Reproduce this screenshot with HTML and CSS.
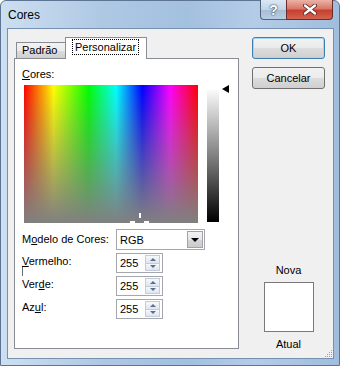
FILE: index.html
```html
<!DOCTYPE html>
<html lang="pt">
<head>
<meta charset="UTF-8" />
<title>Cores</title>
<link rel="stylesheet" href="styles.css">
</head>
<body>

<div class="window">
  <div class="titlebar">
    <span class="title">Cores</span>
    <div class="caption">
      <div class="cap help">?</div>
      <div class="cap close">
        <svg width="14" height="11" viewBox="0 0 14 11">
          <path d="M2 1.5 L12 9.5 M12 1.5 L2 9.5" stroke="#5a1d18" stroke-width="4" stroke-linecap="round"/>
          <path d="M2 1.5 L12 9.5 M12 1.5 L2 9.5" stroke="#fff" stroke-width="2.4" stroke-linecap="round"/>
        </svg>
      </div>
    </div>
  </div>

  <div class="client">
    <div class="left">
      <div class="tabs">
        <div class="tab">Padrão</div>
        <div class="tab active"><span class="focus">Personalizar</span></div>
      </div>
      <div class="panel">
        <div class="cores-label"><u>C</u>ores:</div>
        <div class="picker">
          <div class="spectrum">
            <span class="cross cross-v"></span>
            <span class="cross cross-l"></span>
            <span class="cross cross-r"></span>
          </div>
          <div class="lum"></div>
          <div class="arrow"></div>
        </div>
        <div class="fields">
          <label>M<u>o</u>delo de Cores:</label>
          <div class="combo">
            <span class="val">RGB</span>
            <span class="drop"></span>
          </div>

          <label class="spin-label caret"><u>V</u>ermelho:</label>
          <div class="spin">
            <span class="val">255</span>
            <span class="spin-btns"><span class="up"></span><span class="down"></span></span>
          </div>

          <label class="spin-label">Ver<u>d</u>e:</label>
          <div class="spin">
            <span class="val">255</span>
            <span class="spin-btns"><span class="up"></span><span class="down"></span></span>
          </div>

          <label class="spin-label">Az<u>u</u>l:</label>
          <div class="spin">
            <span class="val">255</span>
            <span class="spin-btns"><span class="up"></span><span class="down"></span></span>
          </div>
        </div>
      </div>
    </div>

    <div class="right">
      <button class="btn default">OK</button>
      <button class="btn">Cancelar</button>
      <div class="nova">Nova</div>
      <div class="swatch"></div>
      <div class="atual">Atual</div>
    </div>

    <svg class="grip" width="9" height="9" viewBox="0 0 9 9">
      <g fill="#a0a0a0">
        <rect x="7" y="1" width="1" height="1"/>
        <rect x="5" y="3" width="1" height="1"/><rect x="7" y="3" width="1" height="1"/>
        <rect x="3" y="5" width="1" height="1"/><rect x="5" y="5" width="1" height="1"/><rect x="7" y="5" width="1" height="1"/>
        <rect x="1" y="7" width="1" height="1"/><rect x="3" y="7" width="1" height="1"/><rect x="5" y="7" width="1" height="1"/><rect x="7" y="7" width="1" height="1"/>
      </g>
    </svg>
  </div>
</div>

</body>
</html>
```

FILE: styles.css
```css
* {
  box-sizing: border-box;
}
body {
  margin: 0;
  background: #fff;
  font-family: "Liberation Sans", Arial, sans-serif;
  font-size: 11px;
  color: #000;
}
.window {
  width: 340px;
  height: 366px;
  border: 1px solid #5d7593;
  border-radius: 6px 6px 0 0;
  background: linear-gradient(to right, #cddff1 0%, #aec8e4 30%, #a3c0df 55%, #b4cce7 75%, #a0bddd 100%);
  display: flex;
  flex-direction: column;
}
.titlebar {
  height: 27px;
  display: flex;
  justify-content: space-between;
  align-items: flex-start;
}
.title {
  padding: 7px 0 0 7px;
  font-size: 12px;
  line-height: 14px;
}
.caption {
  display: flex;
  margin-top: -1px;
  margin-right: 6px;
}
.cap {
  height: 20px;
  display: flex;
  align-items: center;
  justify-content: center;
  border: 1px solid #51637c;
  border-top: none;
}
.help {
  width: 26px;
  border-right: none;
  border-radius: 0 0 0 4px;
  background: linear-gradient(#dce7f3, #c2d4e8 50%, #a7bdd6 51%, #b9cde2);
  color: #fff;
  font-weight: bold;
  font-size: 14px;
  text-shadow: 0 0 2px #2b3c52, 0 0 1px #2b3c52;
}
.close {
  width: 47px;
  border-color: #6a2d27;
  border-radius: 0 0 4px 0;
  background: linear-gradient(#eab3a6, #d9786a 45%, #c7402f 55%, #d4624d);
}
.client {
  height: 331px;
  margin: 0 5px 0 6px;
  border: 1px solid #7690b0;
  background: #f0f0f0;
  display: flex;
  position: relative;
}
.left {
  padding: 8px 0 0 6px;
}
.tabs {
  display: flex;
  align-items: flex-end;
  padding-left: 2px;
}
.tab {
  height: 16px;
  width: 50px;
  border: 1px solid #898c95;
  border-bottom: none;
  background: linear-gradient(#f2f2f2, #ebebeb 50%, #dddddd 51%, #cfcfcf);
  padding: 1px 0 0 5px;
  line-height: 13px;
}
.tab.active {
  width: 82px;
  height: 22px;
  margin-left: -1px;
  margin-bottom: -1px;
  background: #fff;
  position: relative;
  padding: 3px 0 0 6px;
}
.focus {
  border: 1px dotted #000;
  padding: 1px 2px;
}
.panel {
  width: 225px;
  height: 291px;
  border: 1px solid #898c95;
  background: #fff;
  padding: 9px 0 0 7px;
}
.cores-label {
  line-height: 13px;
  height: 13px;
}
.picker {
  display: flex;
  align-items: flex-start;
  margin: 4px 0 0 2px;
}
.spectrum {
  width: 174px;
  height: 138px;
  position: relative;
  background:
    linear-gradient(to bottom, rgba(128, 128, 128, 0), #808080),
    linear-gradient(to right, #f00 0%, #ff0 17%, #0f0 37%, #0ff 53%, #00f 68%, #f0f 84%, #f00 100%);
}
.cross {
  position: absolute;
  background: #fff;
}
.cross-v {
  left: 115px;
  top: 128px;
  width: 2px;
  height: 5px;
}
.cross-l {
  left: 106px;
  top: 136px;
  width: 5px;
  height: 2px;
}
.cross-r {
  left: 120px;
  top: 136px;
  width: 5px;
  height: 2px;
}
.lum {
  width: 12px;
  height: 132px;
  margin: 5px 0 0 9px;
  background: linear-gradient(#fafafa, #808080 50%, #000);
}
.arrow {
  margin-left: 3px;
  width: 0;
  height: 0;
  border-top: 4px solid transparent;
  border-bottom: 4px solid transparent;
  border-right: 7px solid #000;
}
.fields {
  margin-top: 6px;
  display: grid;
  grid-template-columns: 94px auto;
  row-gap: 3px;
  justify-items: start;
}
.fields label {
  align-self: center;
  line-height: 13px;
}
.fields .spin-label {
  align-self: start;
  padding-top: 2px;
}
.caret {
  position: relative;
}
.caret::after {
  content: "";
  position: absolute;
  left: 0;
  top: 14px;
  height: 9px;
  border-left: 1px solid #6d6d6d;
}
.combo {
  width: 89px;
  height: 21px;
  border: 1px solid #a4a7ae;
  background: #fff;
  display: flex;
  align-items: center;
  padding: 1px;
}
.val {
  flex: 1;
  padding-left: 2px;
}
.drop {
  width: 16px;
  height: 17px;
  border: 1px solid #a0a3aa;
  background: linear-gradient(#f3f3f3, #e6e6e6 50%, #d6d6d6 51%, #cbcbcb);
  display: flex;
  align-items: center;
  justify-content: center;
}
.drop::after {
  content: "";
  border-left: 4px solid transparent;
  border-right: 4px solid transparent;
  border-top: 4px solid #000;
}
.spin {
  width: 47px;
  height: 20px;
  border: 1px solid #a4a7ae;
  background: #fff;
  display: flex;
  align-items: center;
  padding: 1px 2px 1px 1px;
}
.spin-btns {
  width: 15px;
  height: 16px;
  display: flex;
  flex-direction: column;
}
.spin-btns span {
  flex: 1;
  border: 1px solid #c4ccd8;
  background: linear-gradient(#f6f8fb, #dfe5ee);
  display: flex;
  align-items: center;
  justify-content: center;
}
.spin-btns .down {
  border-top: none;
}
.up::after {
  content: "";
  border-left: 3px solid transparent;
  border-right: 3px solid transparent;
  border-bottom: 3px solid #5a6f90;
}
.down::after {
  content: "";
  border-left: 3px solid transparent;
  border-right: 3px solid transparent;
  border-top: 3px solid #5a6f90;
}
.right {
  width: 73px;
  margin-left: 13px;
  padding-top: 8px;
  display: flex;
  flex-direction: column;
  align-items: center;
}
.btn {
  width: 73px;
  height: 22px;
  border: 1px solid #707070;
  border-radius: 3px;
  background: linear-gradient(#f2f2f2, #ebebeb 50%, #dddddd 51%, #cfcfcf);
  font-family: "Liberation Sans", Arial, sans-serif;
  font-size: 11px;
  color: #000;
  padding: 0;
}
.btn.default {
  border-color: #3c7fb1;
  box-shadow: inset 0 0 0 1px #a3d8f5;
}
.btn + .btn {
  margin-top: 8px;
}
.nova {
  margin-top: 175px;
  line-height: 13px;
}
.swatch {
  margin-top: 5px;
  width: 50px;
  height: 50px;
  border: 1px solid #7a7a7a;
  background: #fff;
}
.atual {
  margin-top: 6px;
  line-height: 13px;
}
.grip {
  position: absolute;
  right: 0;
  bottom: 0;
}
```
